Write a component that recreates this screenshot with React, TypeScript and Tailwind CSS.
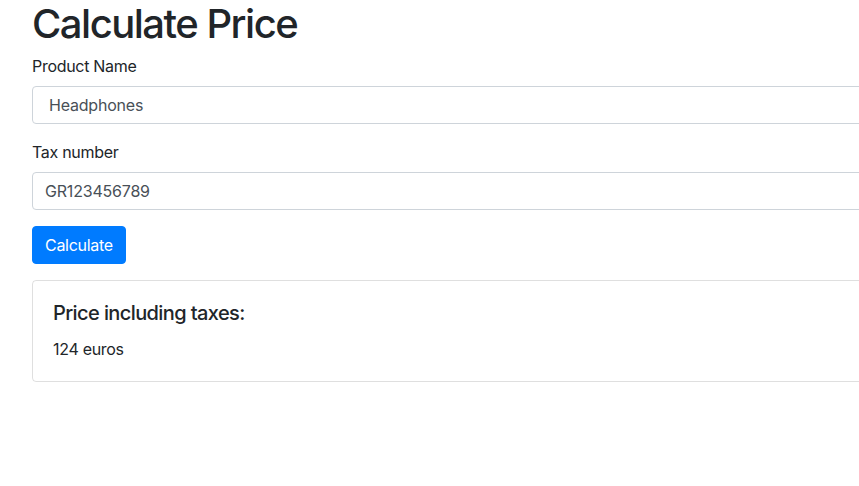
export default function App() {
    const font = { fontFamily: "Inter, 'Noto Sans', sans-serif" };

    return <div className="w-[859px] h-[486px] overflow-hidden bg-white text-[#212529]" style={font}>
        <div className="w-[1000px] pl-8">
            <h1 className="text-[40px] leading-[48px] font-medium mb-[6px] tracking-[-1.5px]">Calculate Price</h1>

            <div className="mb-4">
                <label className="block text-base leading-6 mb-2 tracking-[-0.3px]">Product Name</label>
                <input
                    readOnly
                    value="Headphones"
                    className="block w-full h-[38px] pl-4 pr-3 text-base text-[#495057] border border-[#ced4da] rounded bg-white outline-none tracking-[-0.2px]"
                />
            </div>

            <div className="mb-4">
                <label className="block text-base leading-6 mb-2 tracking-[-0.3px]">Tax number</label>
                <input
                    readOnly
                    value="GR123456789"
                    className="block w-full h-[38px] px-3 text-base text-[#495057] border border-[#ced4da] rounded bg-white outline-none tracking-[-0.2px]"
                />
            </div>

            <button className="h-[38px] px-3 bg-[#007bff] text-white text-base rounded border border-[#007bff] mb-4 tracking-[-0.3px]">Calculate</button>

            <div className="border border-[rgba(0,0,0,0.125)] rounded p-5">
                <h5 className="text-xl leading-6 font-medium mb-3 tracking-[-0.6px]">Price including taxes:</h5>
                <p className="text-base leading-6 tracking-[-0.3px]">124 euros</p>
            </div>
        </div>
    </div>
}
